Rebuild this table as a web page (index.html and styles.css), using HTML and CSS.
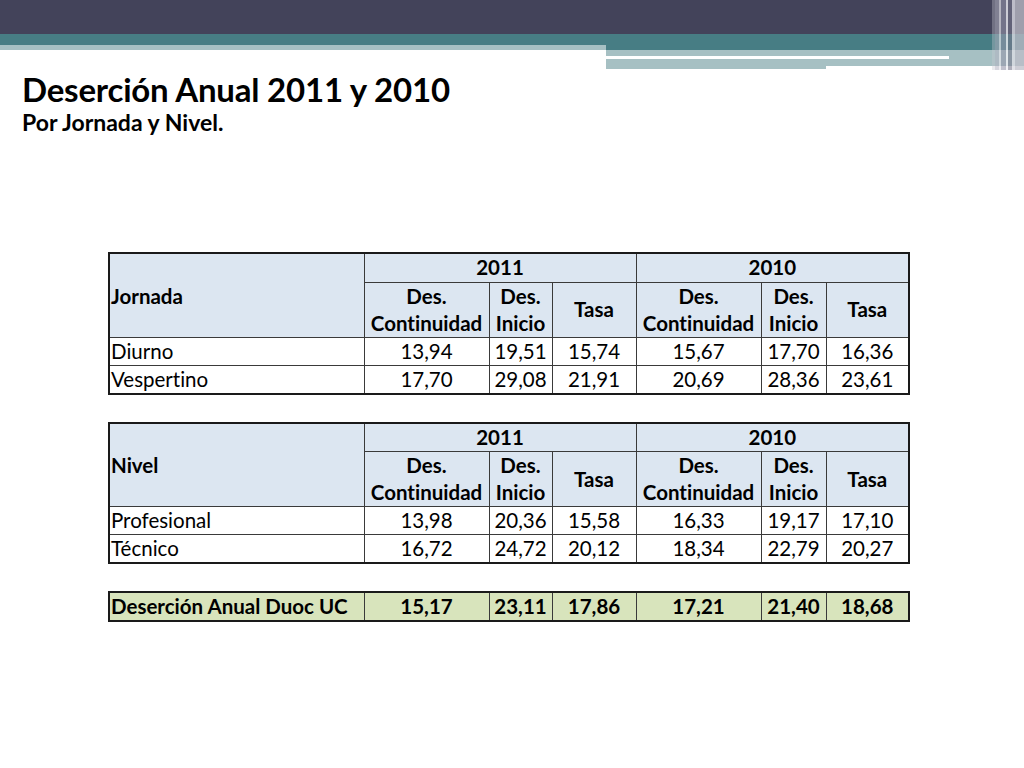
FILE: index.html
```html
<!DOCTYPE html>
<html lang="es">
<head>
<meta charset="utf-8">
<title>Deserción Anual 2011 y 2010</title>
<link rel="stylesheet" href="styles.css">
</head>
<body>
<header class="banner">
  <div class="dark"></div>
  <div class="bands">
    <div class="band-left">
      <div class="teal-a"></div>
      <div class="light-a"></div>
    </div>
    <div class="band-right">
      <div class="teal-b"></div>
      <div class="light-b"></div>
      <div class="line-row"><div class="white-line"></div><div class="light-fill"></div></div>
      <div class="light-c"></div>
      <div class="light-d"></div>
    </div>
  </div>
  <div class="stripes">
    <span class="s1"></span><span class="s2"></span><span class="s3"></span><span class="s4"></span><span class="s5"></span><span class="s6"></span><span class="s7"></span><span class="s8"></span>
  </div>
</header>

<section class="titles">
  <h1>Deserción Anual 2011 y 2010</h1>
  <h2>Por Jornada y Nivel.</h2>
</section>

<main class="tables">
  <table class="data">
    <colgroup><col class="c0"><col class="c1"><col class="c2"><col class="c3"><col class="c4"><col class="c5"><col class="c6"></colgroup>
    <thead>
      <tr class="h1"><th rowspan="2" class="lab">Jornada</th><th colspan="3">2011</th><th colspan="3">2010</th></tr>
      <tr class="h2"><th>Des.<br>Continuidad</th><th>Des.<br>Inicio</th><th>Tasa</th><th>Des.<br>Continuidad</th><th>Des.<br>Inicio</th><th>Tasa</th></tr>
    </thead>
    <tbody>
      <tr><td class="lab">Diurno</td><td>13,94</td><td>19,51</td><td>15,74</td><td>15,67</td><td>17,70</td><td>16,36</td></tr>
      <tr><td class="lab">Vespertino</td><td>17,70</td><td>29,08</td><td>21,91</td><td>20,69</td><td>28,36</td><td>23,61</td></tr>
    </tbody>
  </table>

  <table class="data">
    <colgroup><col class="c0"><col class="c1"><col class="c2"><col class="c3"><col class="c4"><col class="c5"><col class="c6"></colgroup>
    <thead>
      <tr class="h1"><th rowspan="2" class="lab">Nivel</th><th colspan="3">2011</th><th colspan="3">2010</th></tr>
      <tr class="h2"><th>Des.<br>Continuidad</th><th>Des.<br>Inicio</th><th>Tasa</th><th>Des.<br>Continuidad</th><th>Des.<br>Inicio</th><th>Tasa</th></tr>
    </thead>
    <tbody>
      <tr><td class="lab">Profesional</td><td>13,98</td><td>20,36</td><td>15,58</td><td>16,33</td><td>19,17</td><td>17,10</td></tr>
      <tr><td class="lab">Técnico</td><td>16,72</td><td>24,72</td><td>20,12</td><td>18,34</td><td>22,79</td><td>20,27</td></tr>
    </tbody>
  </table>

  <table class="data total">
    <colgroup><col class="c0"><col class="c1"><col class="c2"><col class="c3"><col class="c4"><col class="c5"><col class="c6"></colgroup>
    <tbody>
      <tr><td class="lab">Deserción Anual Duoc UC</td><td>15,17</td><td>23,11</td><td>17,86</td><td>17,21</td><td>21,40</td><td>18,68</td></tr>
    </tbody>
  </table>
</main>
</body>
</html>
```

FILE: styles.css
```css
* { box-sizing: border-box; }
html, body { margin: 0; padding: 0; background: #ffffff; }
body {
  width: 1024px;
  height: 768px;
  overflow: hidden;
  font-family: Lato, "Open Sans", "Liberation Sans", sans-serif;
  font-variant-ligatures: none;
  color: #000;
}

.banner { position: relative; height: 70px; }
.dark { height: 34px; background: #43435a; }
.bands { display: flex; }
.band-left { width: 606px; }
.teal-a { height: 11px; background: #477d84; }
.light-a { height: 5px; background: #a6c0c3; }
.band-right { flex: 1; }
.teal-b { height: 16px; background: #477d84; }
.light-b { height: 6px; background: #a6c0c3; }
.line-row { display: flex; height: 3px; }
.white-line { width: 343px; background: #ffffff; }
.light-fill { flex: 1; background: #a6c0c3; }
.light-c { height: 7px; background: #a6c0c3; }
.light-d { height: 3px; width: 220px; background: #a6c0c3; }

.stripes {
  position: absolute;
  top: 0;
  right: 0;
  width: 32px;
  height: 70px;
  display: flex;
}
.stripes span { display: block; height: 100%; }
.s1 { width: 3px; background: rgba(200,200,210,0.35); }
.s2 { width: 4px; background: rgba(180,180,195,0.55); }
.s3 { width: 2px; background: rgba(230,230,235,0.7); }
.s4 { width: 5px; background: rgba(150,150,170,0.6); }
.s5 { width: 2px; background: rgba(240,240,245,0.8); }
.s6 { width: 4px; background: rgba(120,120,140,0.6); }
.s7 { width: 3px; background: rgba(220,220,228,0.8); }
.s8 { width: 9px; background: rgba(190,190,200,0.75); }

.titles { padding: 0 0 0 22px; }
.titles h1 {
  margin: 0;
  font-size: 33px;
  font-weight: 700;
  line-height: 38px;
  letter-spacing: -0.2px;
}
.titles h2 {
  margin: 0;
  font-size: 23px;
  font-weight: 700;
  line-height: 28px;
}

.tables {
  padding: 116px 0 0 108px;
  display: flex;
  flex-direction: column;
  gap: 27px;
}

.data {
  border-collapse: collapse;
  table-layout: fixed;
  width: 800px;
  border: 2px solid #1a1a1a;
  font-size: 20.5px;
  line-height: 27px;
}
.c0 { width: 255px; }
.c1 { width: 125px; }
.c2 { width: 63px; }
.c3 { width: 84px; }
.c4 { width: 125px; }
.c5 { width: 65px; }
.c6 { width: 83px; }

.data th, .data td {
  border: 1px solid #3a3a3a;
  padding: 0 1px;
  text-align: center;
  white-space: nowrap;
  overflow: hidden;
}
.data th { background: #dce6f1; font-weight: 700; }
.data .h1 th { height: 29px; }
.data .h2 th { height: 55px; line-height: 27px; }
.data td { height: 28px; }
.data .lab { text-align: left; }
.data th.lab { padding-top: 2px; }

.total td { background: #d8e4bc; font-weight: 700; height: 29px; }
```
